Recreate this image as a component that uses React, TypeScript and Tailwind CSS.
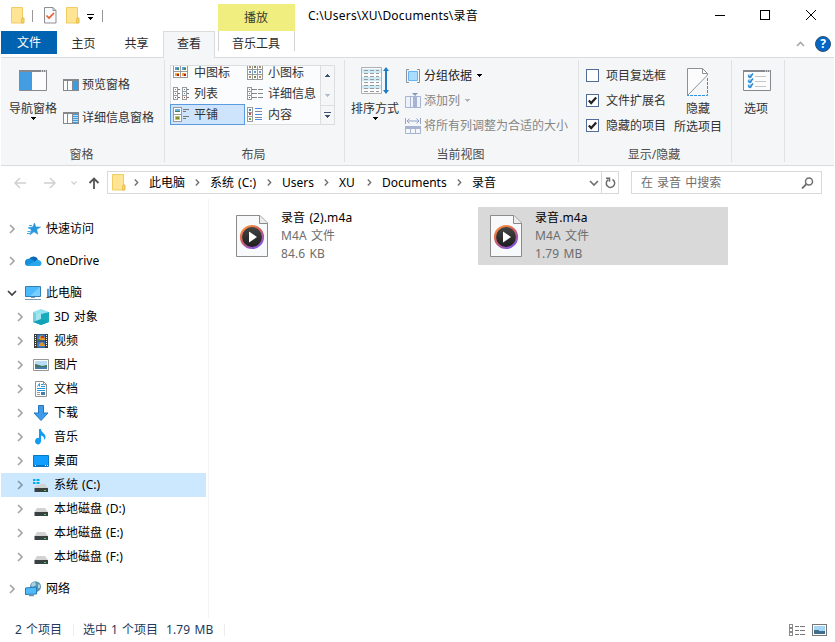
import type { ReactNode } from "react";

const FolderIcon = () => (
  <svg width="14" height="17" viewBox="0 0 14 17" className="shrink-0">
    <path d="M.5.5h11v15.5h-11z" fill="#ffe593" stroke="#f0cd62" />
    <path d="M11 11h2v5h-2.500z" fill="#fbd868" stroke="#e3bd4c" />
  </svg>
);

const CheckedDocIcon = () => (
  <svg width="13" height="17" viewBox="0 0 13 17" className="shrink-0">
    <path d="M.5.5h8.5l3 3v12.500h-11.500z" fill="#f9fafb" stroke="#8c8f93" />
    <path d="M9 .5v3h3" fill="none" stroke="#8c8f93" />
    <path d="M2.500 8.500l2.500 2.500L10 6" fill="none" stroke="#e8592a" strokeWidth="1.600" />
  </svg>
);

const Caret = ({ className = "text-black" }: { className?: string }) => (
  <svg width="5" height="3" viewBox="0 0 5 3" shapeRendering="crispEdges" className={`shrink-0 ${className}`}>
    <path d="M0 0h5v1h-1v1h-1v1h-1v-1h-1v-1h-1z" fill="currentColor" />
  </svg>
);

const NavPaneIcon = () => (
  <svg width="28" height="21" viewBox="0 0 28 21">
    <path d="M.5.5h27v20h-27z" fill="#fcfcfc" stroke="#85898e" />
    <path d="M0 0h28v2h-28z" fill="#85898e" />
    <path d="M22 1h1M24 1h1M26 1h1" stroke="#fff" />
    <path d="M1 2h11v18h-11z" fill="#429de3" />
    <path d="M12.500 2v18" stroke="#85898e" />
  </svg>
);

const PreviewPaneIcon = ({ details }: { details?: boolean }) => (
  <svg width="16" height="12" viewBox="0 0 16 12" shapeRendering="crispEdges" className="shrink-0">
    <path d="M.5.5h15v11h-15z" fill="#fcfcfc" stroke="#85898e" />
    <path d="M0 0h16v2h-16zM4 2h1v9h-1zM9 2h1v9h-1z" fill="#85898e" />
    <path d="M10 2h5v9h-5z" fill="#3b9ce6" />
    {details && <path d="M10 3.500h5M10 5.500h5M10 7.500h5M10 9.500h5" stroke="#b9dffa" />}
  </svg>
);

type GalleryKind = "medium" | "small" | "list" | "details" | "tiles" | "content";

const Frame = ({ x, y, w, h }: { x: number; y: number; w: number; h: number }) => (
  <rect x={x + 0.5} y={y + 0.5} width={w - 1} height={h - 1} fill="#fff" stroke="#9a9a9a" />
);

const Thumb = ({ x, y, warm }: { x: number; y: number; warm?: boolean }) => (
  <g>
    <rect x={x} y={y} width="4" height="3" fill={warm ? "#e8a33b" : "#5f9fd8"} />
    <rect x={x + 2} y={y + 1} width="2" height="2" fill={warm ? "#b81c22" : "#4d8a4c"} />
  </g>
);

const GalleryIcon = ({ kind }: { kind: GalleryKind }) => (
  <svg width="16" height="15" viewBox="0 0 16 15" shapeRendering="crispEdges" className="shrink-0">
    {kind === "medium" && (
      <>
        {[0, 7].map((x) => (
          <g key={x}>
            <Frame x={x} y={0} w={8} h={7} />
            <Frame x={x} y={6} w={8} h={7} />
            <Thumb x={x + 2} y={2} />
            <Thumb x={x + 2} y={8} warm />
          </g>
        ))}
      </>
    )}
    {kind === "small" && (
      <>
        {[0, 5, 10].map((x) =>
          [-1, 4, 9].map((y) => (
            <g key={`${x}-${y}`}>
              <Frame x={x} y={y} w={6} h={6} />
              <rect x={x + 2} y={y + 2} width="2" height="2" fill={y === 4 ? "#5f9fd8" : x === 5 ? "#6d8d55" : "#b98a6a"} />
            </g>
          ))
        )}
      </>
    )}
    {(kind === "list" || kind === "details") && (
      <>
        {(kind === "list" ? [0, 9] : [0]).map((x) => (
          <g key={x}>
            <Frame x={x} y={1} w={5} h={5} />
            <Frame x={x} y={5} w={5} h={5} />
            <Frame x={x} y={9} w={5} h={5} />
            <path d={`M${x + 2} 3h1v1h-1zM${x + 2} 7h1v1h-1z`} fill="#4a8ac4" />
            <path d={`M${x + 2} 11h1v1h-1z`} fill="#c33" />
            <path d={`M${x + 5} 3.500h2M${x + 5} 7.500h2M${x + 5} 11.500h2`} stroke="#777" />
          </g>
        ))}
        {kind === "details" && <path d="M6 3.500h4M11 3.500h5M6 7.500h4M11 7.500h5M6 11.500h4M11 11.500h5" stroke="#888" />}
      </>
    )}
    {kind === "tiles" && (
      <>
        <Frame x={0} y={0} w={9} h={8} />
        <Frame x={0} y={7} w={9} h={8} />
        <path d="M2 2h5v2h-5z" fill="#6ab0e8" />
        <path d="M2 4h5v1h-5z" fill="#447b58" />
        <path d="M2 9h5v4h-5z" fill="#c9c06a" />
        <path d="M3 10h3v2h-3z" fill="#72913e" />
        <path d="M10 2.500h6M10 4.500h3M10 9.500h6M10 11.500h3" stroke="#777" />
      </>
    )}
    {kind === "content" && (
      <>
        <Frame x={0} y={0} w={6} h={6} />
        <Frame x={0} y={5} w={6} h={5} />
        <Frame x={0} y={9} w={6} h={6} />
        <path d="M2 2h2v2h-2z" fill="#4a8ac4" />
        <path d="M2 6h2v2h-2z" fill="#c44" />
        <path d="M2 11h2v2h-2z" fill="#72a13e" />
        <path d="M8 1.500h7M8 7.500h7M8 12.500h7" stroke="#4d89e8" />
        <path d="M8 4.500h7M8 10.500h7" stroke="#888" />
      </>
    )}
  </svg>
);

const SortIcon = () => (
  <svg width="28" height="27" viewBox="0 0 28 27">
    <path d="M.5.500h20v26h-20z" fill="#fcfcfc" stroke="#b0b0b0" />
    <path d="M1 2h19v4h-19zM1 10h19v4h-19zM1 18h19v4h-19z" fill="#cdeaf7" />
    {[4, 7, 10, 13, 16, 19, 22, 25].map((y) => (
      <path key={y} d={`M3 ${y - 0.5}h4M9 ${y - 0.5}h4M15 ${y - 0.5}h3`} stroke="#9a9a9a" />
    ))}
    <path d="M25 2v23" stroke="#1e7dc4" strokeWidth="2" />
    <path d="M22 4l3-4 3 4zM22 23l3 4 3-4z" fill="#1e7dc4" />
  </svg>
);

const GroupByIcon = () => (
  <svg width="16" height="16" viewBox="0 0 16 16" className="shrink-0">
    <path d="M4 1.500h-2.500v13h2.500M12 1.500h2.500v13h-2.500" fill="none" stroke="#8d9195" />
    <path d="M3.500 3.500h9v9h-9z" fill="#a9dcff" stroke="#66b5ee" />
  </svg>
);

const AddColumnIcon = () => (
  <svg width="16" height="15" viewBox="0 0 16 15" className="shrink-0">
    <path d="M.5 3.500h15v11h-15zM5.500 3v11" fill="#eef2fa" stroke="#a6b4d1" />
    <path d="M8 3h4v12h-4z" fill="#a6b4d1" />
    <path d="M7 0h6l-3 3z" fill="#8296bf" />
  </svg>
);

const FitColumnsIcon = () => (
  <svg width="16" height="16" viewBox="0 0 16 16" className="shrink-0">
    <path d="M.5 0v6M15.500 0v6M2 3h12M4.500.500l-2.500 2.500 2.500 2.500M11.500.500l2.500 2.500-2.500 2.500" fill="none" stroke="#91a3c7" />
    <path d="M0 8h16v3h-16z" fill="#a6b4d1" />
    <path d="M.5 9.500v6h15v-6M5.500 10v6M10.500 10v6" fill="none" stroke="#a6b4d1" />
  </svg>
);

const HideIcon = () => (
  <svg width="22" height="28" viewBox="0 0 22 28" className="mt-px">
    <path d="M.5 27.500v-27h15l5.500 5.500v1z" fill="#fcfcfc" />
    <path d="M.5 27.500v-27h15l5 5v1.500zM15.500.500v5h5" fill="none" stroke="#8e9194" />
    <path d="M20.500 10v17.500h-20" fill="none" stroke="#2d93e0" strokeDasharray="3 1" />
  </svg>
);

const OptionsIcon = () => (
  <svg width="28" height="21" viewBox="0 0 28 21">
    <path d="M.5.500h27v20h-27z" fill="#fcfcfc" stroke="#85898e" />
    <path d="M0 0h28v2h-28z" fill="#85898e" />
    <path d="M22 1h1M24 1h1M26 1h1" stroke="#fff" />
    {[6, 11, 16].map((y) => (
      <g key={y}>
        <path d={`M5 ${y - 2}h4v4h-4z`} fill="#a9d8f8" />
        <path d={`M5 ${y - 0.5}l2 2 3-4`} fill="none" stroke="#2684cf" strokeWidth="1.300" />
        <path d={`M12 ${y + 0.5}h11`} stroke="#c6c6c6" />
      </g>
    ))}
  </svg>
);

const Chevron = ({ className = "text-[#a6a6a6]" }: { className?: string }) => (
  <svg width="6" height="10" viewBox="0 0 6 10" className={`shrink-0 ${className}`}>
    <path d="M1 1l4 4-4 4" fill="none" stroke="currentColor" strokeWidth="1.700" />
  </svg>
);

const CrumbChevron = () => (
  <svg width="5" height="7" viewBox="0 0 5 7" className="shrink-0">
    <path d="M.8.600l2.900 2.900-2.900 2.900" fill="none" stroke="#707070" strokeWidth="1.400" />
  </svg>
);

const MediaFileIcon = () => (
  <svg width="32" height="42" viewBox="0 0 32 42" className="shrink-0">
    <defs>
      <linearGradient id="ring" x1="0" y1="0" x2=".6" y2="1">
        <stop offset="0" stopColor="#ff9a3d" />
        <stop offset=".5" stopColor="#d4605c" />
        <stop offset="1" stopColor="#8d55d8" />
      </linearGradient>
      <linearGradient id="disc" x1="0" y1="0" x2="0" y2="1">
        <stop offset="0" stopColor="#454545" />
        <stop offset="1" stopColor="#1c1c1c" />
      </linearGradient>
    </defs>
    <path d="M.5.500h23.500l7.500 7.500v33.500h-31z" fill="#f8f9fa" stroke="#8b8b8b" />
    <path d="M23.500.500v8h8" fill="#ededed" stroke="#8b8b8b" />
    <circle cx="16" cy="22" r="11" fill="url(#disc)" stroke="url(#ring)" strokeWidth="2.200" />
    <path d="M13 16.500v11l8-5.500z" fill="#fff" />
  </svg>
);

const Drive = ({ system }: { system?: boolean }) => (
  <svg width="16" height="16" viewBox="0 0 16 16">
    <path d="M4 7h8l3 4h-13.500z" fill="#d0d2d3" />
    <path d="M1.500 11h13.500v4h-13.500z" fill="#3b4143" />
    <path d="M11 13.500h2" stroke="#3ce03f" />
    {system && (
      <>
        <path d="M0 0h7v8h-7z" fill="#cce8ff" />
        <path d="M0 2h2.500v2h-2.500zM3.500 2h3v2h-3zM0 5h2.500v2h-2.500zM3.500 5h3v2h-3z" fill="#00adef" />
      </>
    )}
  </svg>
);

const treeIcons: Record<string, ReactNode> = {
  quick: (
    <svg width="16" height="16" viewBox="0 0 16 16">
      <path d="M9.500 2l1.300 4h4.700l-3.800 2.500 1 4.800-3.700-2.600-4 3.100 1.400-4.900-2.900-2.400 4.300-.5z" fill="#2796dc" stroke="#2796dc" strokeWidth=".6" />
      <path d="M4 4.500h3M3 7h3M2.500 10.500h3M2 12.500h3" stroke="#45adea" />
    </svg>
  ),
  onedrive: (
    <svg width="17" height="16" viewBox="0 0 17 16">
      <path d="M4 6a5 5 0 0 1 9 .500l-6 5z" fill="#0868b8" />
      <path d="M4 5.800c2-.500 4 1 5.500 2l-3 5.200h-3.500a3.600 3.600 0 0 1 1-7.200z" fill="#1490df" />
      <path d="M2 12.600l9-4.800c2-2 5.500-.3 5.500 2.400 0 2-1.500 2.800-3 2.800h-10z" fill="#28a8ea" />
    </svg>
  ),
  pc: (
    <svg width="17" height="16" viewBox="0 0 17 16">
      <path d="M.5 1.500h15v10h-15z" fill="#4cbaff" stroke="#3380b5" />
      <path d="M15 2L5 11h10z" fill="#79ceff" />
      <path d="M6 12.500h4M0 14.500h16" stroke="#7f9aac" />
    </svg>
  ),
  objects: (
    <svg width="16" height="16" viewBox="0 0 16 16">
      <path d="M0 3l8-3 8 3-8 2z" fill="#91e4ef" />
      <path d="M0 3l8 2v11l-8-3z" fill="#6fd3e0" />
      <path d="M3 4l5 1v6l-5 1z" fill="#a5e6ee" />
      <path d="M8 5l8-2v10l-8 3z" fill="#16acbd" />
      <path d="M0 13l8-3 8 3-8 3z" fill="#13a0b8" />
    </svg>
  ),
  video: (
    <svg width="16" height="16" viewBox="0 0 16 16">
      <path d="M1 1h14v14h-14z" fill="#3c3c3c" />
      <path d="M2.500 2v12M13.500 2v12" stroke="#fff" strokeDasharray="1 1" />
      <path d="M4 1.500h8v6h-8zM4 8.500h8v6h-8z" fill="#3679cf" />
      <path d="M6 4l3-2 3 3v2h-6zM6 11l3-2 3 3v1h-6z" fill="#df9627" />
      <path d="M8 3h3v2h-3z" fill="#c73432" />
      <path d="M4 6h3v1.500h-3z" fill="#4a8b41" />
    </svg>
  ),
  pictures: (
    <svg width="16" height="12" viewBox="0 0 16 12">
      <path d="M.5.500h15v11h-15z" fill="#fff" stroke="#979797" />
      <path d="M2 2h12v8h-12z" fill="#b6dcf6" />
      <path d="M2 5l4 1 3 1 5-1v2h-12z" fill="#42755e" />
      <path d="M2 8h12v2h-12z" fill="#467aa8" />
    </svg>
  ),
  documents: (
    <svg width="16" height="16" viewBox="0 0 16 16">
      <path d="M2.500.500h8l3 3v12h-11z" fill="#fff" stroke="#8e9194" />
      <path d="M10.500.500v3h3" fill="none" stroke="#8e9194" />
      <path d="M4.500 5.500l2-3v3M8 3.500h2M8 5.500h4M4 7.500h8M4 9.500h8" fill="none" stroke="#1f96e6" />
      <path d="M4 11.500h3M4 13.500h3" stroke="#999" />
      <path d="M8 11h4v3h-4z" fill="#477fa3" />
    </svg>
  ),
  downloads: (
    <svg width="16" height="16" viewBox="0 0 16 16">
      <path d="M5.500.500h5v7.500h4.500l-7 7.500-7-7.500h4.500z" fill="#3d9be9" stroke="#2378bd" />
    </svg>
  ),
  music: (
    <svg width="16" height="16" viewBox="0 0 16 16">
      <path d="M6 0h2c0 4 5 4 4.500 9l-1.500 2c.5-3-1-4-3-4.500v5.500a3 3.300 0 1 1-2-3z" fill="#109cf1" />
    </svg>
  ),
  desktop: (
    <svg width="16" height="12" viewBox="0 0 16 12">
      <path d="M.5.500h15v11h-15z" fill="#119fff" stroke="#0878c4" />
      <path d="M1 10.500h14" stroke="#0874bd" />
      <path d="M2 10.500h1M12 10.500h1M14 10.500h1" stroke="#fff" />
    </svg>
  ),
  system: <Drive system />,
  drive: <Drive />,
  network: (
    <svg width="17" height="16" viewBox="0 0 17 16">
      <circle cx="10.500" cy="5.700" r="5.500" fill="#5b95b2" />
      <path d="M7 2l3-1 1 3-3 2-2-1zM13 3l2 1v3l-2 0z" fill="#a9d3e2" />
      <path d="M.5 7l11-1v7l-11 .500z" fill="#4fbbfb" stroke="#2778b5" />
      <path d="M4 14.500h5" stroke="#7193a8" strokeWidth="1.500" />
    </svg>
  ),
};

const tree = [
  { icon: "objects", label: "3D 对象" },
  { icon: "video", label: "视频" },
  { icon: "pictures", label: "图片" },
  { icon: "documents", label: "文档" },
  { icon: "downloads", label: "下载" },
  { icon: "music", label: "音乐" },
  { icon: "desktop", label: "桌面" },
  { icon: "system", label: "系统 (C:)", selected: true },
  { icon: "drive", label: "本地磁盘 (D:)" },
  { icon: "drive", label: "本地磁盘 (E:)" },
  { icon: "drive", label: "本地磁盘 (F:)" },
];

const gallery: { kind: GalleryKind; label: string; selected?: boolean }[] = [
  { kind: "medium", label: "中图标" },
  { kind: "small", label: "小图标" },
  { kind: "list", label: "列表" },
  { kind: "details", label: "详细信息" },
  { kind: "tiles", label: "平铺", selected: true },
  { kind: "content", label: "内容" },
];

const TitleBar = () => (
  <div className="flex h-[31px] items-start">
    <div className="flex h-[31px] w-[217px] items-center pl-[10px]">
      <FolderIcon />
      <div className="ml-[7px] h-3 w-px bg-[#999]" />
      <div className="ml-[11px]">
        <CheckedDocIcon />
      </div>
      <div className="ml-[9px]">
        <FolderIcon />
      </div>
      <svg width="7" height="7" viewBox="0 0 7 7" shapeRendering="crispEdges" className="mt-1 ml-[7px]">
        <path d="M0 0h7v1h-7zM1 3h5v1h-1v1h-1v1h-1v-1h-1v-1h-1z" fill="#000" />
      </svg>
      <div className="ml-[8px] h-3 w-px bg-[#999]" />
    </div>
    <div className="mt-1 flex h-[27px] w-[77px] items-center justify-center bg-[#f1ee80] pr-px text-[#3c3c2c]">播放</div>
    <div className="ml-[13px] flex h-[31px] items-center tracking-[0.2px]">C:\Users\XU\Documents\录音</div>
    <div className="mt-[10px] mr-[17px] ml-auto flex">
      <svg width="10" height="10" viewBox="0 0 10 10" shapeRendering="crispEdges">
        <path d="M0 5h10v1h-10z" />
      </svg>
      <svg width="10" height="10" viewBox="0 0 10 10" shapeRendering="crispEdges" className="ml-[35px]">
        <path d="M.5.500h9v9h-9z" fill="none" stroke="#000" />
      </svg>
      <svg width="11" height="10" viewBox="0 0 11 10" className="ml-9">
        <path d="M0 0l10 10M10 0l-10 10" stroke="#000" />
      </svg>
    </div>
  </div>
);

const Tabs = () => (
  <div className="flex h-[27px] border-b border-[#dadbdc] text-[#2b2b2b]">
    <div className="flex h-[23px] w-14 items-center justify-center bg-[#0063b1] pt-px text-white">文件</div>
    <div className="flex h-[26px] w-[53px] items-center justify-center">主页</div>
    <div className="flex h-[26px] w-[53px] items-center justify-center">共享</div>
    <div className="-mb-px flex h-[27px] w-[52px] items-start justify-center border-x border-t border-[#dadbdc] bg-[#f5f6f7]">
      <span className="flex h-[24px] items-center">查看</span>
    </div>
    <div className="ml-[3px] flex h-[20px] w-[77px] items-center justify-center border-x border-[#d2d2d2] pt-[5px] pr-px">音乐工具</div>
    <div className="mr-[3px] ml-auto flex h-[26px] items-center gap-[10px]">
      <svg width="9" height="6" viewBox="0 0 9 6">
        <path d="M1 5l3.500-3.500L8 5" fill="none" stroke="#a9a9a9" strokeWidth="1.600" />
      </svg>
      <div className="flex size-4 items-center justify-center rounded-full border border-[#35516e] bg-[#0067c8] text-[12px] font-bold text-white">?</div>
    </div>
  </div>
);

const Group = ({ label, width, children }: { label: string; width: string; children: ReactNode }) => (
  <div className={`mt-[2px] flex h-[102px] shrink-0 flex-col border-r border-[#e0e1e2] ${width}`}>
    <div className="flex h-[84px]">{children}</div>
    <div className="flex h-[18px] items-center justify-center pt-[3px] pr-[2px] text-[#4c4c4c]">{label}</div>
  </div>
);

const BigButton = ({ icon, label, caret }: { icon: ReactNode; label: ReactNode; caret?: boolean }) => (
  <div className="flex w-12 shrink-0 flex-col items-center">
    <div className="flex h-10 items-start pt-[7px]">{icon}</div>
    <div className="h-[17px] text-center leading-[18px] whitespace-nowrap">{label}</div>
    {caret && <Caret />}
  </div>
);

const Check = ({ label, checked }: { label: string; checked?: boolean }) => (
  <div className="flex h-[25px] items-center gap-[7px]">
    <span className="flex size-[13px] items-center justify-center border border-[#526c98] bg-white">
      {checked && (
        <svg width="9" height="9" viewBox="0 0 9 9">
          <path d="M.8 4.500l2.400 2.600L8.200 1.500" fill="none" stroke="#222" strokeWidth="2.200" />
        </svg>
      )}
    </span>
    {label}
  </div>
);

const Ribbon = () => (
  <div className="flex h-[108px] border-b border-[#dadbdc] bg-[#f5f6f7] text-[#333]">
    <Group label="窗格" width="w-[164px]">
      <div className="ml-2 flex">
        <BigButton
          icon={
            <div className="pt-[3px]">
              <NavPaneIcon />
            </div>
          }
          label="导航窗格"
          caret
        />
      </div>
      <div className="mt-[8px] ml-[6px] flex flex-col">
        <div className="flex h-[33px] items-center gap-[3px]">
          <PreviewPaneIcon />
          预览窗格
        </div>
        <div className="flex h-[33px] items-center gap-[3px]">
          <PreviewPaneIcon details />
          详细信息窗格
        </div>
      </div>
    </Group>
    <Group label="布局" width="w-[180px]">
      <div className="mt-[5px] ml-[5px] flex h-[60px] w-[165px] border border-[#dcdddf] bg-[#fbfcfd]">
        <div className="-mb-px -ml-px flex h-[59px] w-[150px] items-end overflow-hidden">
          <div className="grid shrink-0 grid-cols-[75px_75px]">
            {gallery.map((g) => (
              <div
                key={g.label}
                className={`flex h-[21px] items-center gap-[5px] leading-[12px] whitespace-nowrap odd:pl-[3px] even:pl-[2px] ${
                  g.selected ? "bg-[#cde4fc] outline outline-[#5a9be0] -outline-offset-1" : ""
                }`}
              >
                <GalleryIcon kind={g.kind} />
                {g.label}
              </div>
            ))}
          </div>
        </div>
        <div className="flex w-[14px] flex-col items-center border-l border-[#dcdddf] bg-[#f5f6f7] text-[#3d526f]">
          <div className="flex h-[19px] items-center">
            <Caret className="rotate-180" />
          </div>
          <div className="flex h-5 items-center">
            <Caret className="text-[#b5bfca]" />
          </div>
          <div className="flex h-[19px] w-full flex-col items-center justify-center gap-[2px] border-t border-[#dcdddf]">
            <div className="h-px w-[7px] bg-[#3d526f]" />
            <Caret className="text-[#3d526f]" />
          </div>
        </div>
      </div>
    </Group>
    <Group label="当前视图" width="w-[234px]">
      <div className="ml-[6px] flex">
        <BigButton icon={<SortIcon />} label="排序方式" caret />
      </div>
      <div className="mt-[3px] ml-[6px] flex flex-col text-[#868686]">
        <div className="flex h-[25px] items-center gap-[3px] text-[#222]">
          <GroupByIcon />
          分组依据
          <div className="ml-[2px]">
            <Caret />
          </div>
        </div>
        <div className="flex h-[25px] items-center gap-[3px]">
          <AddColumnIcon />
          添加列
          <div className="ml-[2px]">
            <Caret className="text-[#b4b4b4]" />
          </div>
        </div>
        <div className="flex h-[25px] items-center gap-[3px] whitespace-nowrap">
          <FitColumnsIcon />
          将所有列调整为合适的大小
        </div>
      </div>
    </Group>
    <Group label="显示/隐藏" width="w-[153px]">
      <div className="mt-[3px] ml-[7px] flex w-20 flex-col">
        <Check label="项目复选框" />
        <Check label="文件扩展名" checked />
        <Check label="隐藏的项目" checked />
      </div>
      <div className="ml-[8px]">
        <BigButton
          icon={<HideIcon />}
          label={
            <>
              隐藏
              <br />
              所选项目
            </>
          }
        />
      </div>
    </Group>
    <Group label="" width="w-[53px]">
      <BigButton
        icon={
          <div className="pt-[3px] pl-[2px]">
            <OptionsIcon />
          </div>
        }
        label="选项"
      />
    </Group>
  </div>
);

const crumbs = [
  { label: "此电脑", width: "w-[61px]" },
  { label: "系统 (C:)", width: "w-[72px]" },
  { label: "Users", width: "w-[57px]" },
  { label: "XU", width: "w-[43px]" },
  { label: "Documents", width: "w-[90px]" },
  { label: "录音", width: "w-12" },
];

const AddressBar = () => (
  <div className="flex h-[33px] items-center">
    <div className="flex w-[106px] items-center pl-[13px] text-[#d0d0d0]">
      <svg width="12" height="12" viewBox="0 0 12 12">
        <path d="M12 6H1M6 1L1 6l5 5" fill="none" stroke="currentColor" strokeWidth="1.500" />
      </svg>
      <svg width="12" height="12" viewBox="0 0 12 12" className="ml-[18px]">
        <path d="M0 6h11M6 1l5 5-5 5" fill="none" stroke="currentColor" strokeWidth="1.500" />
      </svg>
      <svg width="6" height="4" viewBox="0 0 6 4" className="ml-[15px]">
        <path d="M.5.500L3 3l2.500-2.500" fill="none" stroke="currentColor" strokeWidth="1.300" />
      </svg>
      <svg width="12" height="12" viewBox="0 0 12 12" className="ml-[11px] text-[#555]">
        <path d="M6 12V1.500M1.500 6L6 1.500 10.500 6" fill="none" stroke="currentColor" strokeWidth="1.800" />
      </svg>
    </div>
    <div className="flex h-[23px] w-[512px] items-center border border-[#d9d9d9] pl-1">
      <FolderIcon />
      <div className="ml-2 flex flex-1 items-center">
        {crumbs.map((crumb) => (
          <div key={crumb.label} className={`flex items-center whitespace-nowrap ${crumb.width}`}>
            <CrumbChevron />
            <span className="ml-[10px]">{crumb.label}</span>
          </div>
        ))}
      </div>
      <svg width="10" height="6" viewBox="0 0 10 6" className="mr-[2px]">
        <path d="M1 1l4 4 4-4" fill="none" stroke="#707070" strokeWidth="1.700" />
      </svg>
      <div className="flex h-full w-[17px] items-center justify-center border-l border-[#d9d9d9]">
        <svg width="11" height="12" viewBox="0 0 11 12">
          <path d="M7.500 2.500a4.200 4.200 0 1 1-4.200.100M1 1.200h3.500v3.500" fill="none" stroke="#6b6b6b" strokeWidth="1.500" />
        </svg>
      </div>
    </div>
    <div className="ml-3 flex h-[23px] w-[191px] items-center justify-between border border-[#d9d9d9] pr-[7px] pl-[9px] text-[#6d6d6d]">
      在 录音 中搜索
      <svg width="13" height="12" viewBox="0 0 13 12">
        <circle cx="8" cy="4.500" r="3.500" fill="none" stroke="#707070" strokeWidth="1.500" />
        <path d="M5.500 7L1 11.500" stroke="#707070" strokeWidth="1.800" />
      </svg>
    </div>
  </div>
);

const TreeRoot = ({ icon, label, open }: { icon: string; label: string; open?: boolean }) => (
  <div className="flex h-6 items-center pl-[7px]">
    <div className="flex w-[17px] items-center">
      {open ? (
        <svg width="10" height="6" viewBox="0 0 10 6" className="-ml-px">
          <path d="M1 1l4 4 4-4" fill="none" stroke="#404040" strokeWidth="1.700" />
        </svg>
      ) : (
        <Chevron className="ml-px text-[#a6a6a6]" />
      )}
    </div>
    <div className="w-[21px]">{treeIcons[icon]}</div>
    {label}
  </div>
);

const Sidebar = () => (
  <div className="w-[208px] shrink-0 border-r border-[#f3f3f3] pt-[18px]">
    <TreeRoot icon="quick" label="快速访问" />
    <div className="h-2" />
    <TreeRoot icon="onedrive" label="OneDrive" />
    <div className="h-2" />
    <TreeRoot icon="pc" label="此电脑" open />
    {tree.map((row) => (
      <div key={row.label} className={`flex h-6 w-[205px] items-center pl-[16px] ${row.selected ? "bg-[#cce8ff]" : ""}`}>
        <Chevron className={row.selected ? "text-[#8399aa]" : "text-[#a6a6a6]"} />
        <div className="ml-[10px] w-[21px]">{treeIcons[row.icon]}</div>
        {row.label}
      </div>
    ))}
    <div className="h-2" />
    <TreeRoot icon="network" label="网络" />
  </div>
);

const FileTile = ({ name, size, selected }: { name: string; size: string; selected?: boolean }) => (
  <div className={`flex h-[58px] w-[250px] items-center gap-[13px] pl-3 ${selected ? "bg-[#d9d9d9]" : ""}`}>
    <MediaFileIcon />
    <div className="pb-px leading-[18px] tracking-[0.1px] text-[#6d6d6d]">
      <div className="text-black">{name}</div>
      <div>M4A 文件</div>
      <div>{size}</div>
    </div>
  </div>
);

const StatusBar = () => (
  <div className="flex h-6 items-center pl-[14px] text-[#1e395b]">
    <span className="w-[58px]">2 个项目</span>
    <div className="h-3 w-px bg-[#ededed]" />
    <span className="ml-[9px] w-[83px] whitespace-nowrap">选中 1 个项目</span>
    <span className="w-[58px] tracking-[0.1px] whitespace-nowrap">1.79 MB</span>
    <div className="h-3 w-px bg-[#ededed]" />
    <div className="mr-[7px] ml-auto flex items-center gap-[7px]">
      <svg width="16" height="12" viewBox="0 0 16 12" shapeRendering="crispEdges">
        <path d="M.5.500h3v3h-3zM.5 4.500h3v3h-3zM.5 8.500h3v3h-3z" fill="#fff" stroke="#8a8a8a" />
        <path d="M6 2.500h4M11 2.500h5M6 6.500h4M11 6.500h5M6 10.500h4M11 10.500h5" stroke="#777" />
      </svg>
      <svg width="15" height="12" viewBox="0 0 15 12" shapeRendering="crispEdges">
        <path d="M.5.500h14v11h-14z" fill="#fff" stroke="#777" />
        <path d="M2 2h11v8h-11z" fill="#a6d6f5" />
        <path d="M2 6h5v1h6v3h-11z" fill="#406f8c" />
      </svg>
    </div>
  </div>
);

const App = () => {
  return (
    <div className="flex h-[642px] w-[835px] flex-col overflow-hidden bg-white px-px font-['Noto_Sans','Noto_Sans_CJK_SC',sans-serif] text-[12px] leading-[18px] text-black [word-spacing:1px]">
      <TitleBar />
      <Tabs />
      <Ribbon />
      <AddressBar />
      <div className="flex h-[419px]">
        <Sidebar />
        <div className="mt-2 ml-[15px] flex h-[58px] gap-1">
          <FileTile name="录音 (2).m4a" size="84.6 KB" />
          <FileTile name="录音.m4a" size="1.79 MB" selected />
        </div>
      </div>
      <StatusBar />
    </div>
  );
};

export default App;
